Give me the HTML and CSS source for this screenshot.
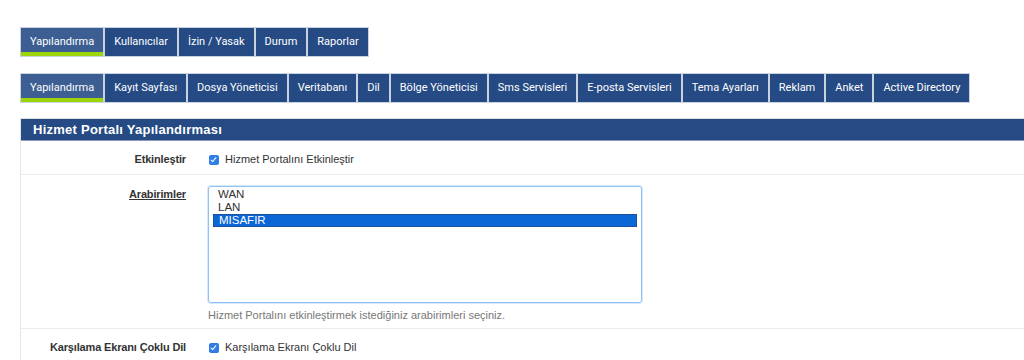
FILE: index.html
```html
<!DOCTYPE html>
<html lang="tr">
<head>
    <meta charset="UTF-8">
    <title>Hizmet Portalı</title>
    <link rel="stylesheet" href="styles.css">
</head>
<body>
    <div class="page">
        <ul class="tabs main-tabs">
            <li class="tab active">Yapılandırma</li>
            <li class="tab">Kullanıcılar</li>
            <li class="tab">İzin / Yasak</li>
            <li class="tab">Durum</li>
            <li class="tab">Raporlar</li>
        </ul>
        <ul class="tabs sub-tabs">
            <li class="tab active">Yapılandırma</li>
            <li class="tab">Kayıt Sayfası</li>
            <li class="tab">Dosya Yöneticisi</li>
            <li class="tab">Veritabanı</li>
            <li class="tab">Dil</li>
            <li class="tab">Bölge Yöneticisi</li>
            <li class="tab">Sms Servisleri</li>
            <li class="tab">E-posta Servisleri</li>
            <li class="tab">Tema Ayarları</li>
            <li class="tab">Reklam</li>
            <li class="tab">Anket</li>
            <li class="tab">Active Directory</li>
        </ul>

        <div class="panel">
            <div class="panel-title">Hizmet Portalı Yapılandırması</div>
            <div class="row">
                <div class="row-label">Etkinleştir</div>
                <div class="row-field">
                    <label class="check"><span class="box"></span>Hizmet Portalını Etkinleştir</label>
                </div>
            </div>
            <div class="row">
                <div class="row-label label-top"><u>Arabirimler</u></div>
                <div class="row-field field-list">
                    <div class="listbox">
                        <div class="option">WAN</div>
                        <div class="option">LAN</div>
                        <div class="option selected">MISAFIR</div>
                    </div>
                    <p class="help">Hizmet Portalını etkinleştirmek istediğiniz arabirimleri seçiniz.</p>
                </div>
            </div>
            <div class="row">
                <div class="row-label">Karşılama Ekranı Çoklu Dil</div>
                <div class="row-field">
                    <label class="check"><span class="box"></span>Karşılama Ekranı Çoklu Dil</label>
                </div>
            </div>
        </div>
    </div>
</body>
</html>
```

FILE: styles.css
```css
body {
    margin: 0;
    background: #fff;
    font-family: "Liberation Sans", Arial, sans-serif;
    color: #333;
    overflow: hidden;
}
.page {
    padding: 27px 0 0 20px;
}
.tabs {
    list-style: none;
    margin: 0;
    padding: 0;
    display: flex;
}
.sub-tabs {
    margin-top: 16px;
}
.tab {
    font-family: Roboto, sans-serif;
    font-size: 11px;
    font-weight: 400;
    color: #fff;
    background: #254a84;
    border: 1px solid #c9d2df;
    height: 30px;
    line-height: 27px;
    padding: 0 9px;
    box-sizing: border-box;
    white-space: nowrap;
}
.tab.active {
    background: #3d5e93;
    box-shadow: inset 0 -4px 0 #9ed40b;
}
.panel {
    margin-top: 15px;
    border-left: 1px solid #e6e6e6;
    border-top: 1px solid #dcdcdc;
}
.panel-title {
    background: #254a84;
    color: #fff;
    font-size: 13px;
    font-weight: bold;
    letter-spacing: 0.25px;
    height: 21px;
    line-height: 21px;
    padding-left: 12px;
    border-bottom: 1px solid #8a9bb8;
}
.row {
    display: grid;
    grid-template-columns: 165px 1fr;
    border-bottom: 1px solid #ececec;
    font-size: 11px;
    line-height: 13px;
}
.row-label {
    text-align: right;
    font-weight: bold;
    color: #333;
    letter-spacing: -0.15px;
    padding: 12px 0 8px;
}
.label-top {
    padding-top: 13px;
}
.row-field {
    padding: 12px 0 8px 23px;
}
.field-list {
    padding: 11px 0 6px 22px;
}
.check {
    display: flex;
    align-items: center;
    gap: 6px;
    color: #333;
}
.box {
    width: 10px;
    height: 10px;
    border-radius: 2px;
    background: #2f7ee8;
    position: relative;
}
.box::after {
    content: "";
    position: absolute;
    left: 3px;
    top: 1px;
    width: 2px;
    height: 5px;
    border: solid #fff;
    border-width: 0 1px 1px 0;
    transform: rotate(40deg);
}
.listbox {
    width: 434px;
    height: 117px;
    border: 1px solid #8fc1f2;
    border-radius: 3px;
    box-shadow: 0 0 0 1px #d6e8fc;
    padding: 1px 4px;
    box-sizing: border-box;
    line-height: 13px;
    font-size: 11.5px;
}
.option {
    padding-left: 5px;
    color: #333;
}
.option.selected {
    background: #0b66d6;
    color: #fff;
    border: 1px dotted #2a3d66;
    line-height: 11px;
}
.help {
    margin: 6px 0 0;
    color: #777;
    font-size: 11px;
}
```
